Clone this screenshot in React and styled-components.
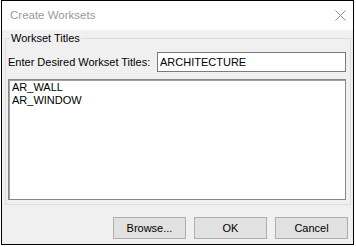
import styled, { createGlobalStyle } from 'styled-components';

const GlobalStyle = createGlobalStyle`
  html, body {
    margin: 0;
    background: #ffffff;
  }
  * {
    box-sizing: border-box;
  }
`;

const Window = styled.div`
  margin-left: 1px;
  width: 353px;
  height: 245px;
  border: 1px solid #000000;
  display: flex;
  flex-direction: column;
  font-family: 'Liberation Sans', Arial, sans-serif;
  font-size: 11px;
  color: #000000;
`;

const TitleBar = styled.div`
  height: 29px;
  flex: none;
  background: #ffffff;
  display: flex;
  align-items: center;
  justify-content: space-between;
  padding: 0 7px;

  .title {
    font-size: 11.5px;
    color: #9a9a9a;
    padding-left: 1px;
    padding-bottom: 1px;
  }
`;

const CloseButton = styled.button`
  width: 12px;
  height: 12px;
  padding: 0;
  border: none;
  background: transparent;
  display: flex;
  align-items: center;
  justify-content: center;
  cursor: pointer;
`;

const Client = styled.div`
  flex: 1;
  background: #f0f0f0;
  display: flex;
  flex-direction: column;
  padding: 2px 2px 5px 3px;
`;

const GroupBox = styled.fieldset`
  margin: 0;
  height: 173px;
  border: 1px solid #dcdcdc;
  padding: 7px 4px 4px 2px;
  display: flex;
  flex-direction: column;
  gap: 7px;

  legend {
    margin-left: 2px;
    padding: 0 1px;
    line-height: 13px;
  }
`;

const Row = styled.div`
  display: flex;
  align-items: center;
  justify-content: space-between;
  height: 20px;

  label {
    line-height: 13px;
  }
`;

const TextBox = styled.input`
  width: 189px;
  height: 20px;
  border: 1px solid #7a7a7a;
  background: #ffffff;
  padding: 0 2px;
  font: inherit;
  color: #000000;
  outline: none;
`;

const ListBox = styled.textarea`
  width: 100%;
  height: 121px;
  resize: none;
  border: 1px solid #828790;
  box-shadow: inset 1px 1px 0 #a0a0a0;
  background: #ffffff;
  padding: 1px 3px;
  font: inherit;
  line-height: 13px;
  color: #000000;
  outline: none;
  overflow: hidden;
`;

const ButtonRow = styled.div`
  display: flex;
  justify-content: flex-end;
  gap: 8px;
  margin-top: 12px;
  padding-right: 3px;
`;

const Button = styled.button`
  width: 73px;
  height: 22px;
  background: #e1e1e1;
  border: 1px solid #adadad;
  padding: 0;
  font: inherit;
  color: #000000;
  cursor: pointer;
`;

const App = () => {
  return (
    <>
      <GlobalStyle />
      <Window>
        {/* TITLE BAR */}
        <TitleBar>
          <span className="title">Create Worksets</span>
          <CloseButton type="button" aria-label="Close">
            <svg width="11" height="11" viewBox="0 0 11 11">
              <path d="M0.5 0.5 L10.5 10.5 M10.5 0.5 L0.5 10.5" stroke="#8c8c8c" strokeWidth="1" />
            </svg>
          </CloseButton>
        </TitleBar>

        <Client>
          <GroupBox>
            <legend>Workset Titles</legend>
            <Row>
              <label htmlFor="titles">Enter Desired Workset Titles:</label>
              <TextBox id="titles" defaultValue="ARCHITECTURE" />
            </Row>
            <ListBox readOnly value={'AR_WALL\nAR_WINDOW'} />
          </GroupBox>

          {/* DIALOG BUTTONS */}
          <ButtonRow>
            <Button type="button">Browse...</Button>
            <Button type="button">OK</Button>
            <Button type="button">Cancel</Button>
          </ButtonRow>
        </Client>
      </Window>
    </>
  );
};
export default App;
